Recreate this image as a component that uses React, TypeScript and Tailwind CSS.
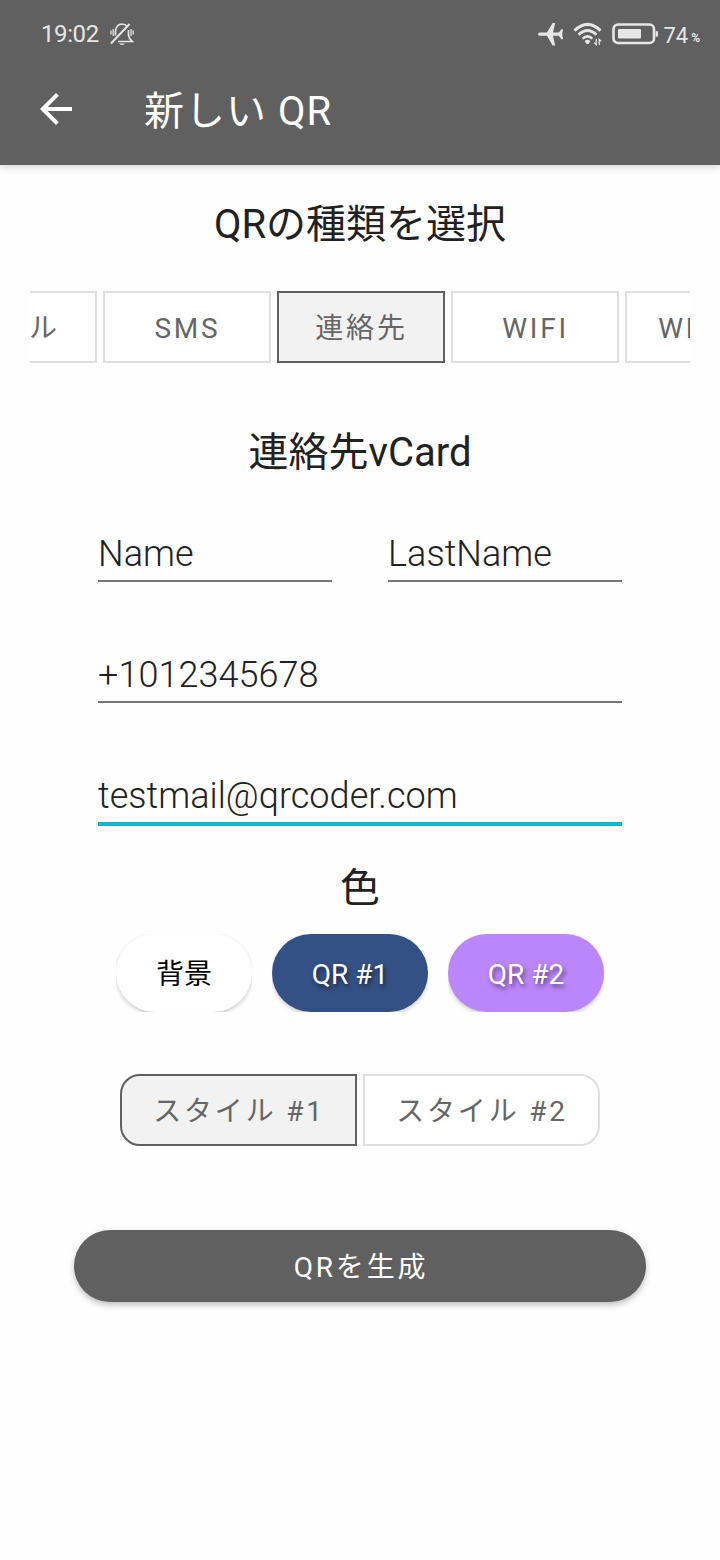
import type { ReactNode } from 'react';
import { useState } from 'react';
import clsx from 'clsx';

const TYPES = ['メール', 'SMS', '連絡先', 'WIFI', 'WHATSAPP'];
const STYLES = ['スタイル #1', 'スタイル #2'];

function StatusBar() {
  return (
    <div className="flex h-[68px] items-center pr-[20px] pl-[41px] text-[#e6e6e6]">
      <span className="text-[24px] leading-7 tracking-[-0.4px]">19:02</span>
      <svg className="ml-[10px]" width="26" height="26" viewBox="0 0 26 26" fill="none" stroke="currentColor">
        <path d="M6.500 14.500V10.500Q7 3.200 13 3q3.200 0 5 2.200M19.500 9v5q.3 3.500 3.700 6.500H9" strokeWidth="1.700" />
        <path d="M2 22.500 20.500 3" strokeWidth="2" />
        <path d="M2 9.500v4M4.200 8v7M22 8v7M24.200 9.500v4" strokeWidth="1.300" />
        <path d="M10 22.500h6q-3 3-6 0z" fill="currentColor" stroke="none" />
      </svg>
      <div className="ml-auto flex items-center">
        <svg width="26" height="24" viewBox="0 0 26 24" fill="currentColor">
          <path d="M0 12.200Q0 10.600 2 10.600H9L14.600 1H17.200L15 10.600H20.800L23.400 7.200H25L24.200 12.200 25 17.200H23.400L20.800 13.800H15L17.200 23.400H14.600L9 13.800H2Q0 13.800 0 12.200z" />
        </svg>
        <svg className="ml-[9px]" width="30" height="24" viewBox="0 0 30 24" fill="none" stroke="currentColor">
          <path d="M1.500 8.600q13-12.500 26 0" strokeWidth="2.900" />
          <path d="M5.600 12.700q8.900-8.400 17.800 0" strokeWidth="2.700" />
          <path d="M9.600 16.600q4.900-4.400 9.800 0" strokeWidth="2.500" />
          <path d="M11.600 19q2.900-2.600 5.800 0l-1.500 2.400q-1.400 1.200-2.800 0z" fill="currentColor" stroke="none" />
          <path d="M23.200 17v5.600l-2-2M26.200 23v-5.600l2 2" strokeWidth="1.300" />
        </svg>
        <svg className="ml-[9px]" width="48" height="22" viewBox="0 0 48 22" fill="none" stroke="currentColor">
          <rect x="1.500" y="1.500" width="40.500" height="18.500" rx="4.500" strokeWidth="2.600" />
          <rect x="6" y="6" width="23" height="9.500" rx="1" fill="currentColor" stroke="none" />
          <path d="M44.800 8.200v5.400" strokeWidth="2.400" />
        </svg>
        <span className="ml-[3px] pt-[3px] text-[22px] leading-7">74</span>
        <span className="mt-[7px] ml-[3px] text-[12px] leading-4 font-bold">%</span>
      </div>
    </div>
  );
}

function Heading({ children }: { children: ReactNode }) {
  return <h2 className="flex h-12 items-center justify-center pt-[2px] text-[40px] text-[#212121]">{children}</h2>;
}

function ToggleButton(props: { label: string; active: boolean; className: string; onClick: () => void }) {
  return (
    <button
      type="button"
      className={clsx(
        'flex h-[72px] shrink-0 items-center justify-center border-2 pt-1 pl-px text-[28px] tracking-[2.8px] whitespace-nowrap text-[#666666]',
        props.active ? 'border-[#606060] bg-[#f2f2f2]' : 'border-[#dfdfdf] bg-white',
        props.className,
      )}
      onClick={props.onClick}
    >
      {props.label}
    </button>
  );
}

function TextField({ value, focused, className }: { value: string; focused?: boolean; className?: string }) {
  return (
    <div
      className={clsx(
        'flex items-start text-[36px] leading-[52px] font-light tracking-[0.05px] text-[#212121]',
        focused ? 'h-[56px] border-b-4 border-[#14b8ca]' : 'h-[54px] border-b-2 border-[#757575]',
        className,
      )}
    >
      {value}
    </div>
  );
}

// The wrapper clips the shadow to the button bounds
function ColorButton({ label, className }: { label: string; className: string }) {
  return (
    <div className="h-[78px] overflow-hidden">
      <button
        type="button"
        className={clsx(
          'flex h-full items-center justify-center rounded-full pt-1 text-[28px] shadow-[0_2px_4px_rgba(0,0,0,0.2)]',
          className,
        )}
      >
        {label}
      </button>
    </div>
  );
}

export default function App() {
  const [type, setType] = useState(2);
  const [style, setStyle] = useState(0);

  return (
    <div
      lang="ja"
      className="flex h-[1560px] w-[720px] flex-col overflow-hidden bg-[#fefefe] font-[Roboto,'Noto_Sans_CJK_JP',sans-serif]"
    >
      <header className="h-[165px] shrink-0 bg-[#606060] shadow-[0_2px_8px_rgba(0,0,0,0.18)]">
        <StatusBar />
        <div className="flex h-[82px] items-center pl-8 text-white">
          <svg width="48" height="48" viewBox="0 0 24 24" fill="currentColor">
            <path d="M20 11H7.830l5.590-5.590L12 4l-8 8 8 8 1.410-1.410L7.830 13H20v-2z" />
          </svg>
          <h1 className="ml-16 pt-[6px] text-[40px] leading-[56px] tracking-[1px]">新しい QR</h1>
        </div>
      </header>

      <main className="flex flex-col items-center pt-[35px]">
        <Heading>QRの種類を選択</Heading>

        <div className="mt-[43px] w-[660px] overflow-hidden">
          <div className="-ml-[101px] flex gap-1.5">
            {TYPES.map((label, i) => (
              <ToggleButton
                key={label}
                label={label}
                active={i === type}
                className={label === 'WHATSAPP' ? 'w-[236px]' : 'w-[168px]'}
                onClick={() => setType(i)}
              />
            ))}
          </div>
        </div>

        <div className="mt-[65px]">
          <Heading>連絡先vCard</Heading>
        </div>

        <div className="mt-[52px] flex w-[524px] flex-col">
          <div className="flex gap-14">
            <TextField value="Name" className="flex-1" />
            <TextField value="LastName" className="flex-1" />
          </div>
          <TextField value="+1012345678" className="mt-[67px]" />
          <TextField value="testmail@qrcoder.com" focused className="mt-[67px]" />
        </div>

        <div className="mt-[38px]">
          <Heading>色</Heading>
        </div>
        <div className="mt-[22px] flex gap-5">
          <ColorButton label="背景" className="w-[136px] bg-white text-black" />
          <ColorButton
            label="QR #1"
            className="w-[156px] bg-[#345185] text-white [text-shadow:2px_3px_4px_rgba(0,0,0,0.5)]"
          />
          <ColorButton
            label="QR #2"
            className="w-[156px] bg-[#bb86fc] text-white [text-shadow:2px_3px_4px_rgba(0,0,0,0.5)]"
          />
        </div>

        <div className="mt-[62px] flex gap-1.5">
          {STYLES.map((label, i) => (
            <ToggleButton
              key={label}
              label={label}
              active={i === style}
              className={i === 0 ? 'w-[237px] rounded-l-[20px]' : 'w-[237px] rounded-r-[20px]'}
              onClick={() => setStyle(i)}
            />
          ))}
        </div>

        <button
          type="button"
          className="mt-[84px] flex h-[72px] w-[572px] items-center justify-center rounded-full bg-[#606060] pt-1 pl-0.5 text-[28px] tracking-[2.8px] text-white shadow-[0_3px_6px_rgba(0,0,0,0.25)]"
        >
          QRを生成
        </button>
      </main>
    </div>
  );
}
